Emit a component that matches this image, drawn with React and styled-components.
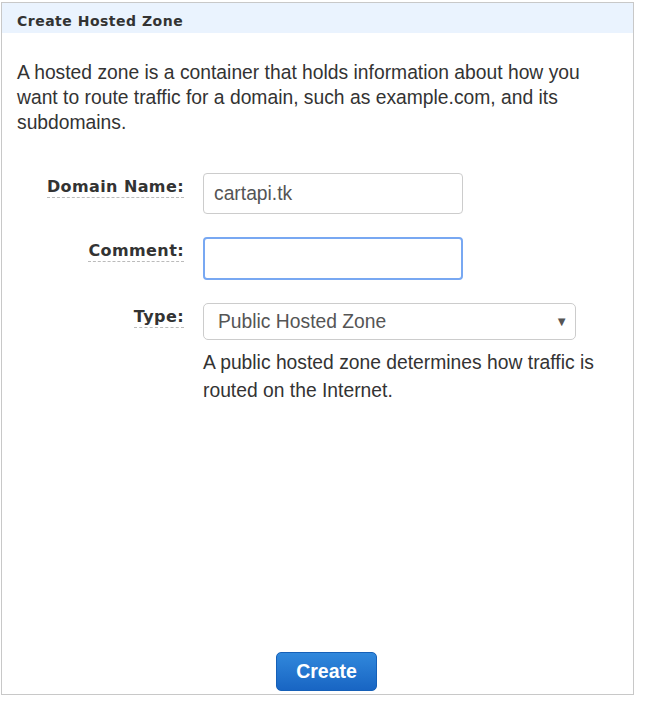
import React, { useState } from 'react';
import styled, { createGlobalStyle } from 'styled-components';

const GlobalStyle = createGlobalStyle`
  body {
    margin: 0;
    background: #ffffff;
    font-family: "Liberation Sans", Arial, sans-serif;
  }
`;

const Panel = styled.div`
  margin: 2px 0 0 1px;
  width: 631px;
  height: 691px;
  border: 1px solid #c8c8c8;
  display: flex;
  flex-direction: column;
  background: #fff;
`;

const Header = styled.div`
  box-sizing: border-box;
  height: 30px;
  background: #eaf3fe;
  display: flex;
  align-items: center;
  padding: 6px 0 0 15px;
  font-family: "DejaVu Sans", Verdana, sans-serif;
  font-weight: bold;
  font-size: 14px;
  letter-spacing: 0.5px;
  color: #333;
`;

const Intro = styled.p`
  margin: 27px 0 0 15px;
  width: 585px;
  font-size: 19.3px;
  line-height: 25px;
  color: #333;
`;

const Form = styled.div`
  margin-top: 38px;
  display: grid;
  grid-template-columns: 182px 1fr;
  column-gap: 19px;
  row-gap: 23px;
  align-items: start;
`;

const LabelCell = styled.div`
  display: flex;
  justify-content: flex-end;
  padding-top: 4px;
`;

const Label = styled.span`
  font-family: "DejaVu Sans", Verdana, sans-serif;
  font-weight: bold;
  font-size: 16px;
  letter-spacing: 0.4px;
  color: #333;
  border-bottom: 1px dashed #bbb;
  padding-bottom: 1px;
`;

const Field = styled.div`
  display: flex;
  flex-direction: column;
`;

const TextInput = styled.input`
  box-sizing: border-box;
  width: 260px;
  height: ${p => (p.$focused ? 43 : 41)}px;
  border: ${p => (p.$focused ? '2px solid #78a8f2' : '1px solid #ccc')};
  border-radius: 4px;
  padding: 0 ${p => (p.$focused ? 9 : 10)}px;
  font-family: "Liberation Sans", Arial, sans-serif;
  font-size: 19.3px;
  color: #555;
  outline: none;
  caret-color: #333;
`;

const SelectBox = styled.div`
  box-sizing: border-box;
  width: 373px;
  height: 37px;
  border: 1px solid #ccc;
  border-radius: 5px;
  display: flex;
  align-items: center;
  justify-content: space-between;
  padding: 0 7px 0 14px;
  font-size: 19.3px;
  color: #555;
`;

const Arrow = styled.span`
  font-size: 13px;
  color: #555;
`;

const Help = styled.p`
  margin: 9px 0 0;
  font-size: 19.3px;
  line-height: 28px;
  color: #333;
  max-width: 410px;
`;

const Footer = styled.div`
  margin-top: auto;
  display: flex;
  padding: 0 0 3px 274px;
`;

const Button = styled.button`
  width: 101px;
  height: 39px;
  border: 1px solid #1560b8;
  border-radius: 5px;
  background: linear-gradient(#3188dc, #1865c3);
  color: #fff;
  font-family: "Liberation Sans", Arial, sans-serif;
  font-weight: bold;
  font-size: 19.5px;
  cursor: pointer;
`;

export default function App() {
  const [domain, setDomain] = useState('cartapi.tk');
  const [comment, setComment] = useState('');

  return (
    <>
      <GlobalStyle />
      <Panel>
        <Header>Create Hosted Zone</Header>
        <Intro>
          A hosted zone is a container that holds information about how you want to route
          traffic for a domain, such as example.com, and its subdomains.
        </Intro>
        <Form>
          <LabelCell><Label>Domain Name:</Label></LabelCell>
          <Field>
            <TextInput value={domain} onChange={e => setDomain(e.target.value)} />
          </Field>
          <LabelCell><Label>Comment:</Label></LabelCell>
          <Field>
            <TextInput $focused autoFocus value={comment} onChange={e => setComment(e.target.value)} />
          </Field>
          <LabelCell><Label>Type:</Label></LabelCell>
          <Field>
            <SelectBox>
              <span>Public Hosted Zone</span>
              <Arrow>▼</Arrow>
            </SelectBox>
            <Help>A public hosted zone determines how traffic is routed on the Internet.</Help>
          </Field>
        </Form>
        <Footer>
          <Button>Create</Button>
        </Footer>
      </Panel>
    </>
  );
}
